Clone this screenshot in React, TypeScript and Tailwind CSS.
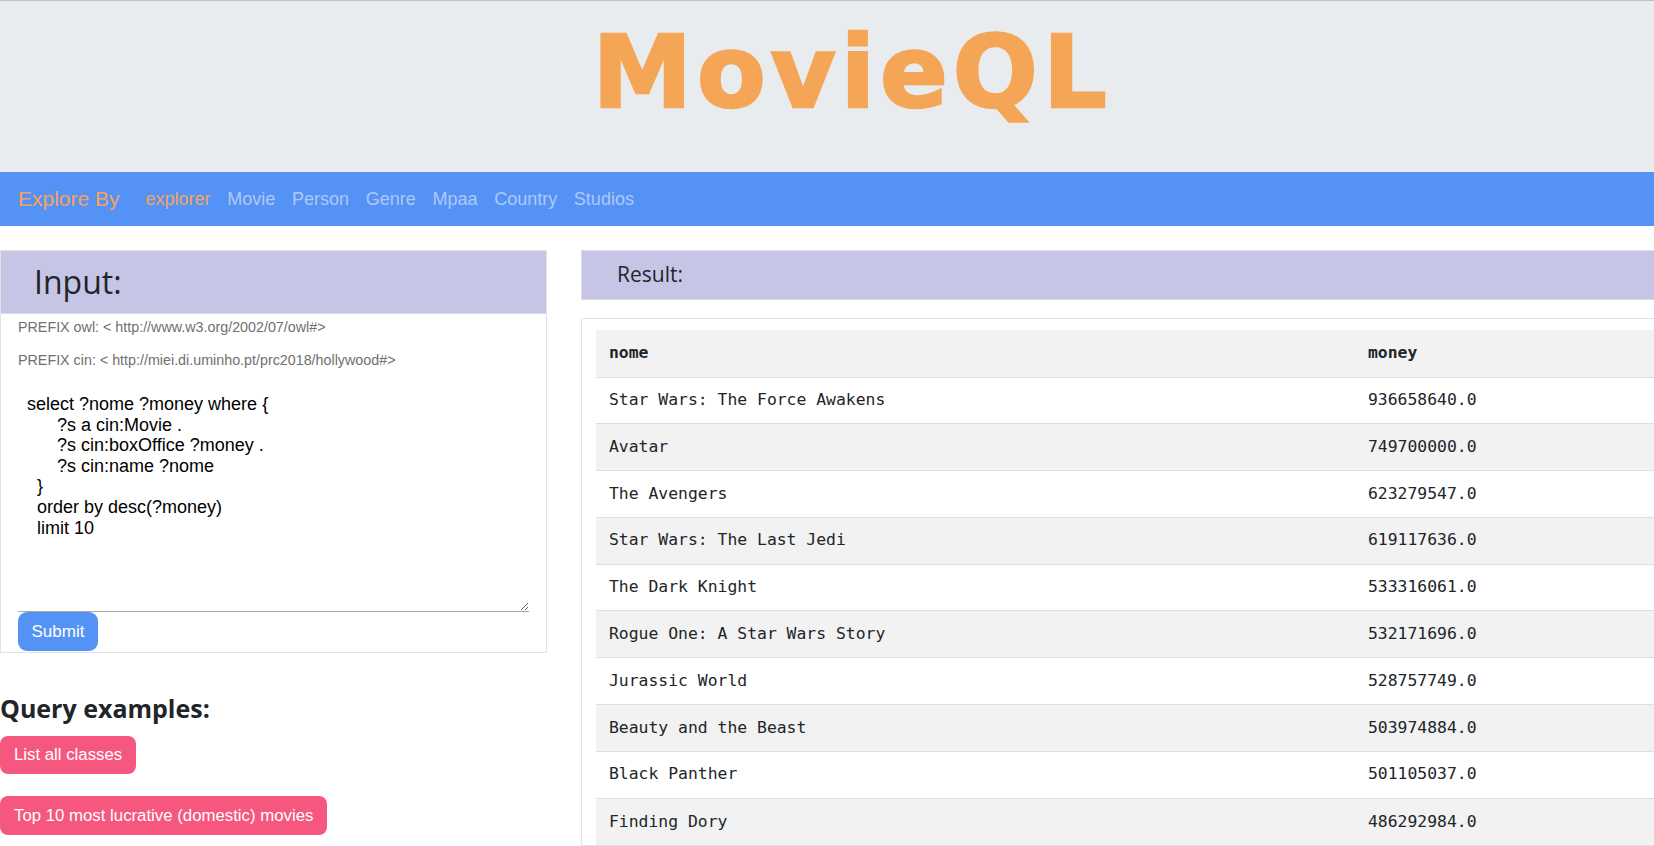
import React from "react";

const rows: [string, string][] = [
  ["Star Wars: The Force Awakens", "936658640.0"],
  ["Avatar", "749700000.0"],
  ["The Avengers", "623279547.0"],
  ["Star Wars: The Last Jedi", "619117636.0"],
  ["The Dark Knight", "533316061.0"],
  ["Rogue One: A Star Wars Story", "532171696.0"],
  ["Jurassic World", "528757749.0"],
  ["Beauty and the Beast", "503974884.0"],
  ["Black Panther", "501105037.0"],
  ["Finding Dory", "486292984.0"],
];

const query = `select ?nome ?money where {
      ?s a cin:Movie .
      ?s cin:boxOffice ?money .
      ?s cin:name ?nome
  }
  order by desc(?money)
  limit 10`;

export default function App() {
  return (
    <div className="w-[1654px] h-[846px] overflow-hidden bg-white font-['Liberation_Sans',Arial,sans-serif]">
      <header className="h-[172px] bg-[#e9ecef] border-t border-[#c2c2c2] flex justify-center">
        <h1 className="pt-[22px] pl-[50px] text-[100px] tracking-[5px] leading-none font-bold text-[#f4a656] [-webkit-text-stroke:2.5px_#f4a656] font-['DejaVu_Sans',Verdana,sans-serif]">
          MovieQL
        </h1>
      </header>

      <nav className="h-[54px] bg-[#5592f5] flex items-center pl-[18px]">
        <span className="text-[21px] text-[#f4a45a] mr-[26px]">Explore By</span>
        <div className="flex items-center gap-[16.7px] text-[18px]">
          <span className="text-[#f4a45a]">explorer</span>
          <span className="text-[#afc8f9]">Movie</span>
          <span className="text-[#afc8f9]">Person</span>
          <span className="text-[#afc8f9]">Genre</span>
          <span className="text-[#afc8f9]">Mpaa</span>
          <span className="text-[#afc8f9]">Country</span>
          <span className="text-[#afc8f9]">Studios</span>
        </div>
      </nav>

      <main className="flex pt-[24px]">
        <section className="w-[547px] shrink-0">
          <div className="border border-[#e3e3e6]">
            <div className="h-[63px] bg-[#c6c5e6] border-b border-[#dcdce6] flex items-center pl-[33px]">
              <h2 className="text-[32px] text-[#212529] font-['Open_Sans',sans-serif]">Input:</h2>
            </div>
            <div className="px-[17px] pt-[3px] pb-[1px]">
              <p className="text-[14.3px] leading-[20px] text-[#707070]">
                PREFIX owl: &lt; http://www.w3.org/2002/07/owl#&gt;
              </p>
              <p className="mt-[13px] text-[14.3px] leading-[20px] text-[#707070]">
                PREFIX cin: &lt; http://miei.di.uminho.pt/prc2018/hollywood#&gt;
              </p>
              <textarea
                readOnly
                defaultValue={query}
                className="block mt-[14px] w-[511px] h-[228px] pt-[10px] pl-[9px] text-[18px] leading-[20.6px] text-black border-0 border-b border-[#a9a9a9] outline-none font-['Liberation_Sans',Arial,sans-serif]"
              />
              <button className="mt-0 h-[39px] w-[80px] rounded-[9px] bg-[#5592f5] text-white text-[17px]">
                Submit
              </button>
            </div>
          </div>

          <h4 className="mt-[40px] text-[25px] leading-[30px] font-bold text-[#212529] font-['Open_Sans',sans-serif]">
            Query examples:
          </h4>
          <div className="flex flex-col items-start gap-[22px] mt-[13px]">
            <button className="h-[38px] px-[14px] rounded-[8px] bg-[#f5577f] text-white text-[16.8px]">
              List all classes
            </button>
            <button className="h-[39px] px-[14px] rounded-[8px] bg-[#f5577f] text-white text-[16.8px]">
              Top 10 most lucrative (domestic) movies
            </button>
          </div>
        </section>

        <section className="ml-[34px] w-[1100px] shrink-0">
          <div className="h-[50px] bg-[#c6c5e6] border border-[#dcdce6] flex items-center pl-[35px]">
            <h3 className="text-[21px] text-[#212529] font-['Open_Sans',sans-serif]">Result:</h3>
          </div>
          <div className="mt-[18px] border border-[#e3e3e6] pt-[11px] pl-[14px]">
            <table className="w-[1080px] border-collapse text-[16.4px] text-[#212529] font-['DejaVu_Sans_Mono',monospace]">
              <thead>
                <tr className="h-[47px] bg-[#f2f2f2]">
                  <th className="w-[759px] text-left pl-[13px] font-bold">nome</th>
                  <th className="text-left pl-[13px] font-bold">money</th>
                </tr>
              </thead>
              <tbody>
                {rows.map(([n, m], i) => (
                  <tr
                    key={n}
                    className={`h-[46.8px] border-t border-[#dedede] ${i % 2 === 1 ? "bg-[#f2f2f2]" : "bg-white"}`}
                  >
                    <td className="pl-[13px]">{n}</td>
                    <td className="pl-[13px]">{m}</td>
                  </tr>
                ))}
              </tbody>
            </table>
          </div>
        </section>
      </main>
    </div>
  );
}
